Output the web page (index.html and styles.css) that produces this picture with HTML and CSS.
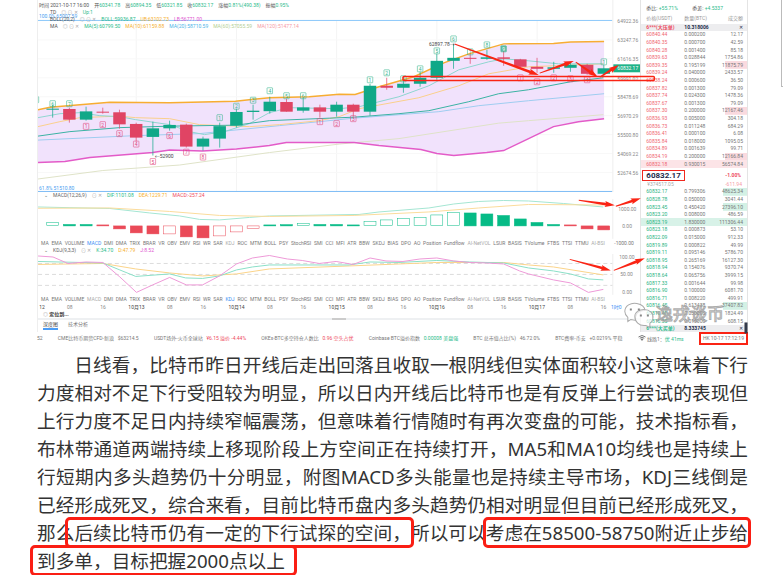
FILE: index.html
```
<!DOCTYPE html>
<html lang="zh-CN">
<head>
    <meta charset="UTF-8">
    <meta name="viewport" content="width=device-width, initial-scale=1.0">
    <title>比特币行情分析</title>
    <link rel="stylesheet" href="styles.css">
</head>
<body>
    <div class="page">
        <article class="article">
            <div class="terminal">
                <div class="main">
                    <div class="chart">
                        <section class="price-panel">
                            <svg id="priceChart" class="plot" viewBox="38 0 604 193"></svg>
                            <div class="legend">
                                <p><span>时间 2021-10-17 16:00</span> <span>开<b class="green">60341.78</b></span> <span>高<b class="green">60894.35</b></span> <span>低<b class="green">60321.85</b></span> <span>收<b class="green">60832.17</b></span> <span>涨幅<b class="green">0.81%(490.38)</b></span> <span>振幅<b class="green">0.95%</b></span></p>
                                <p class="indent"><span>TD</span> <span class="icons">◎ ⊙ ✕</span> <b class="green">Up:1</b></p>
                                <p class="indent"><span>BOLL(20,2)</span> <span class="icons">◎ ⊙ ✕</span> <b class="green">BOLL:59936.87</b> <b class="orange">UB:63102.73</b> <b class="magenta">LB:56771.00</b></p>
                                <p class="indent"><span>MA</span> <span class="icons">◎ ⊙ ✕</span> <b class="green">MA(5):60799.50</b> <b class="orange">MA(10):61159.88</b> <b class="blue">MA(20):58710.59</b> <b class="lime">MA(60):57055.59</b> <b class="pink">MA(120):51477.14</b></p>
                            </div>
                        </section>
                        <section class="sub-panel">
                            <p class="sub-title"><span>⌄</span> <span>MACD(12,26,9)</span> <span class="icons">⊙ ✕</span> <b class="green">DIF:1101.08</b> <b class="orange">DEA:1229.71</b> <b class="red">MACD:-257.24</b></p>
                            <svg id="macdChart" class="plot" viewBox="38 199 604 40"></svg>
                        </section>
                        <div class="tabs-row">
                            <nav class="tabs" data-active="MACD" data-muted="KDJ"></nav>
                            <span class="tick">-1000.00</span>
                        </div>
                        <section class="sub-panel">
                            <p class="sub-title"><span>⌄</span> <span>KDJ(9,3,3)</span> <span class="icons">⊙ ✕</span> <b class="green">K:34.70</b> <b class="orange">D:47.79</b> <b class="magenta">J:8.52</b></p>
                            <svg id="kdjChart" class="plot" viewBox="38 253 604 41"></svg>
                        </section>
                        <div class="tabs-row">
                            <nav class="tabs" data-active="KDJ" data-muted="MACD"></nav>
                            <span class="tick"></span>
                        </div>
                        <svg id="timeAxis" class="plot" viewBox="38 302 604 8"></svg>
                        <div class="locate"><span class="icons">◎</span> <b>定位到...</b></div>
                        <div class="scrollbar"><span class="thumb"></span></div>
                        <nav class="views">
                            <button class="view active">深度图</button>
                            <button class="view">技术分析</button>
                        </nav>
                    </div>
                    <aside class="book">
                        <div class="ratio"><span>委比: <b class="green">+55.71%</b></span><span>委差: <b class="green">+4.5337</b></span></div>
                        <div class="book-head"><span>价格(USDT)</span><span>数量(BTC)</span><span>成交额</span></div>
                        <div class="big-order"><b class="red">6***(大压单)</b><b>10.318006</b><span>✕</span></div>
                        <table class="orders asks"><tbody id="asks"></tbody></table>
                        <div class="last">
                            <strong>60832.17</strong><b class="red">-1.00%</b>
                            <span>¥374517.05</span><span class="pink">-611.94</span>
                        </div>
                        <table class="orders bids"><tbody id="bids"></tbody></table>
                        <div class="big-order"><b class="green">6***(大买单)</b><b>8.333745</b><span>✕</span></div>
                    </aside>
                </div>
                <footer class="ticker">
                    <span>52</span>
                    <span>CME比特币期货CFD-新浪 &nbsp; $63214.5</span>
                    <span>USDT场外-火币全球站 &nbsp; <b class="red">¥6.15 溢价 -4.44%</b></span>
                    <span>OKEx-BTC多空持仓人数比 &nbsp; <b class="red">0.96 空头占优</b></span>
                    <span>Coinbase BTC溢价指数 &nbsp; <b class="green">0.00008 美盘强</b></span>
                    <span>BTC 总市值占比(%) &nbsp; 46.72 0%</span>
                    <span>BTC费率-币安 &nbsp; +0.0219% 平稳</span>
                    <span><svg class="wifi" viewBox="0 0 16 12"><path d="M1 4Q8-2 15 4M3.500 6.500Q8 3 12.500 6.500" /><path class="dot" d="M5 8Q8 6 11 8L8 12Z" /></svg> 线路1：<b class="green">优 41ms</b></span>
                    <time>HK 10-17 17:12:19</time>
                </footer>
                <svg id="notes" class="notes" viewBox="38 0 710 345">
                    <g class="wechat">
                        <path d="M625 311c0-6 6-9 12-8c5 1 8 4 8 7c-8 0-10 5-9 10l-5-1l-3 2v-4q-3-3-3-6Z" />
                        <path d="M635 316c0-5 5-7 9-7c6 0 10 4 9 9c0 2-2 4-3 5v4l-4-2c-7 1-11-4-11-9Z" />
                        <path class="eye" d="M630 309h2M638 309h2M640 315h2M647 315h2" />
                    </g>
                    <text class="watermark" x="656" y="320">逸戎谈币</text>
                </svg>
            </div>
            <p class="text">日线看，比特币昨日开线后走出回落且收取一根阴线但实体面积较小这意味着下行力度相对不足下行受阻较为明显，所以日内开线后比特币也是有反弹上行尝试的表现但上行力度不足日内持续窄幅震荡，但意味着行情随时有再次变盘的可能，技术指标看，布林带通道两端持续上移现阶段上方空间正在持续打开，MA5和MA10均线也是持续上行短期内多头趋势仍十分明显，附图MACD多头能量也是持续主导市场，KDJ三线倒是已经形成死叉，综合来看，目前比特币盘内多头趋势仍相对明显但目前已经形成死叉，那么<mark class="early">后续比特币仍有一定的下行试探的空间，</mark>所以可以<mark>考虑在58500-58750附近止步给</mark><mark class="wide">到多单，目标把握2000点以上</mark></p>
        </article>
        <div class="edge"></div>
    </div>
    <script src="script.js"></script>
</body>
</html>
```
FILE: styles.css
```
body {
    margin: 0;
    background: #fff;
    color: #333;
    font-family: "Noto Sans", "Noto Sans CJK SC", sans-serif;
}
p {
    margin: 0;
}
b {
    font-weight: normal;
}
button {
    border: none;
    padding: 0;
    background: none;
    font: inherit;
    color: inherit;
    cursor: pointer;
}
.page {
    display: flex;
    justify-content: space-between;
}
.article {
    flex: 1;
    margin: 0 33px 0 37px;
}
.edge {
    height: 86px;
    border-left: 1px solid #bbb;
    border-bottom: 1px solid #bbb;
    width: 1px;
}

/* article text */
.text {
    margin-top: 6px;
    font-size: 14pt;
    line-height: 28px;
    text-indent: 2em;
    text-align: justify;
}
.text mark {
    background: none;
    color: inherit;
    outline: 3px solid #fa1e14;
    border-radius: 2px;
}
.text .early {
    padding-left: 6px;
    margin-left: -6px;
}
.text .wide {
    padding: 0 9px 0 4px;
    margin: 0 -9px 0 -4px;
}

/* trading terminal */
.terminal {
    position: relative;
    font-family: Roboto, "Noto Sans CJK SC", sans-serif;
    font-size: 5px;
    line-height: 7px;
    color: #777;
}
.main {
    display: flex;
}
.chart {
    flex: 604;
    min-width: 0;
    border-left: 1px solid #eee;
    box-sizing: border-box;
}
.plot {
    display: block;
    width: 100%;
}
.price-panel {
    position: relative;
}
.legend {
    position: absolute;
    top: 2px;
    left: 1px;
    color: #555;
}
.legend p,
.sub-title {
    display: flex;
    gap: 5px;
    white-space: nowrap;
}
.legend .indent {
    padding-left: 11px;
}
.icons {
    color: #aaa;
}
.green { color: #2abb8b; }
.red { color: #ee4a5e; }
.orange { color: #f5b02e; }
.blue { color: #4cb4e8; }
.magenta { color: #e055d0; }
.lime { color: #b4cf94; }
.pink { color: #f59aa4; }

.sub-title {
    padding-left: 6px;
    color: #666;
}
.tabs-row {
    display: flex;
    height: 8px;
    align-items: center;
}
.tabs {
    flex: 1;
    display: flex;
    justify-content: space-between;
    padding: 0 9px 0 3px;
}
.tabs .active {
    color: #3b8ff5;
}
.tabs .muted {
    color: #aaa;
}
.tick {
    width: 26px;
}
.locate {
    padding-left: 5px;
    color: #333;
}
.locate b {
    font-weight: bold;
}
.scrollbar {
    height: 2px;
    background: #eef0f2;
}
.thumb {
    display: block;
    width: 14px;
    height: 2px;
    margin: 0 auto;
    background: #ccc;
}
.views {
    display: flex;
    gap: 10px;
    padding: 1px 5px 0;
}
.view {
    border-bottom: 2px solid transparent;
}
.view.active {
    color: #444;
    border-color: #4b9cf5;
}

/* order book */
.book {
    flex: 106;
    border-right: 1px solid #e4e4e4;
    border-left: 1px solid #e4e4e4;
    box-sizing: border-box;
    font-variant-numeric: tabular-nums;
}
.ratio {
    display: grid;
    grid-template-columns: 46px 1fr;
    padding: 5px 5px 3px;
    color: #555;
}
.book-head,
.big-order {
    display: grid;
    grid-template-columns: 38px 1fr auto;
    padding: 0 4px 0 5px;
}
.book-head {
    padding-bottom: 2px;
    color: #999;
}
.big-order {
    background: #ededef;
    color: #222b4a;
}
.big-order b {
    font-weight: bold;
}
.orders {
    width: 100%;
    height: 137px;
    border-collapse: collapse;
    line-height: 7px;
}
.orders td {
    padding: 0;
}
.orders td:first-child {
    width: 38px;
    padding-left: 5px;
}
.orders td:last-child {
    padding-right: 4px;
    text-align: right;
}
.asks td:first-child { color: #ef6672; }
.bids td:first-child { color: #1fb37f; }
.asks .full { background: #fce4e7; }
.bids .full { background: #d8f2e8; }
.asks .bar {
    background: linear-gradient(#fadadf, #fadadf) right / 22px no-repeat;
}
.bids .bar {
    background: linear-gradient(#d3f1e5, #d3f1e5) right / 24px no-repeat;
}
.last {
    display: grid;
    grid-template-columns: 1fr auto;
    align-items: center;
    padding: 2px 5px 0 1px;
}
.last strong {
    justify-self: start;
    padding: 0 3px;
    border: 1px solid #f0281e;
    font-size: 8px;
    line-height: 9px;
    color: #222b4a;
}
.last .red {
    font-weight: bold;
}
.last span:nth-of-type(1) {
    padding-left: 5px;
    color: #aaa;
}

.ticker {
    display: flex;
    align-items: center;
    justify-content: space-between;
    height: 13px;
    white-space: nowrap;
}
.wifi {
    width: 8px;
    height: 6px;
    fill: none;
    stroke: #777;
    stroke-width: 2;
}
.wifi .dot {
    fill: #777;
    stroke: none;
}
.ticker time {
    padding: 1px 2px;
    border: 2px solid #fa2414;
}

/* svg drawing */
.notes {
    position: absolute;
    top: 0;
    left: 0;
    width: 100%;
    pointer-events: none;
}
.arrow {
    fill: #fa2414;
}
.box {
    fill: none;
    stroke: #fa2414;
    stroke-width: 1.5;
}
.wechat path {
    fill: #fff;
    fill-opacity: 0.7;
    stroke: #aaa;
}
.wechat .eye {
    stroke: #888;
    stroke-width: 2;
}
.watermark {
    font-size: 17px;
    fill: #fff;
    fill-opacity: 0.6;
    stroke: #888;
    stroke-width: 1;
    stroke-opacity: 0.7;
}
.line {
    fill: none;
}
```
FILE: script.js
```
const NS = "http://www.w3.org/2000/svg";
const GREEN = "#10a888";
const RED = "#e04464";

function add(parent, tag, attrs, text) {
    const el = document.createElementNS(NS, tag);
    for (const key in attrs) el.setAttribute(key, attrs[key]);
    if (text !== undefined) el.textContent = text;
    parent.appendChild(el);
    return el;
}

function line(parent, points, color, width, opacity) {
    add(parent, "polyline", { points, class: "line", stroke: color, "stroke-width": width || 1, opacity: opacity || 1 });
}

function label(parent, x, y, text, color, anchor) {
    add(parent, "text", { x, y: y + 2, fill: color || "#888", "text-anchor": anchor || "start" }, text);
}

function candleX(i) {
    return 52.7 + i * 16.75;
}

// price chart
const price = document.getElementById("priceChart");
const upper = "38,110 50,107.5 110,102.5 170,103 236,101.5 270,98 310,97 340,94.5 356,94.7 380,87 415,77 445,63 470,54 505,44 555,43.7 572,42 605.7,41.5";
const lower = "38,163 65,162 90,158 153,153 170,150.5 203,151.5 237,149.5 270,146 287,142.8 355,142.8 380,146 422,150 438,154 455,156 488,153 505,151 530,139 555,127 580,122 605.7,119";

[136.5, 237, 337.5, 438, 538.6].forEach(x => line(price, `${x},21 ${x},192`, "#f4f4f4"));
[40, 59, 78, 97, 116, 135, 154, 173].forEach(y => line(price, `38,${y} 614,${y}`, "#f8f8f8"));
add(price, "polygon", { points: upper + " " + lower.split(" ").reverse().join(" "), fill: "#f1e2fc" });
line(price, "38,20.500 614,20.500", "#8cc8fa");
line(price, "38,192 614,192", "#7cbcf5");
line(price, "614.500,0 614.500,193", "#eee");
line(price, "38,179.5 103,171 180,165.5 270,153 340,144.5 400,139 500,123.5 530,121 605,115", "#dfe3c8");
line(price, "38,140.5 136,136 200,134 280,126 355,118.5 440,112 480,106 530,101 605.7,94", "#9fcdf0");
line(price, "38,127 60,122 80,118 105,117 120,116.5 136,118 170,119 200,125 250,127 280,125 320,121 340,117 360,109 420,98 460,86 490,74 530,67 605,64", "#fad08c");
line(price, "38,118 60,114 80,113 100,116 120,117 136,120 170,125 190,132 205,135 225,132 250,124 270,113 290,108 340,109 360,107 400,97 430,86 460,70 490,62 505,59 530,61 560,64 605,64", "#8fd6d0");
line(price, "38,136.5 70,132 120,128 170,126.5 237,125.5 270,121 330,118.5 355,117.5 400,114 430,111 470,102 500,94 530,90 572,82 605,78", "#3bb3a4");
line(price, upper, "#f7ad32", 1.5);
line(price, lower, "#e35bc8", 1.5);

// [body top, body bottom, wick top, wick bottom, up]
const candles = [
    [109, 110, 105, 118, 1], [109.3, 120, 108, 123, 0], [111.7, 120, 107, 121, 1], [112, 113, 108, 114, 0],
    [112.6, 124.7, 110, 129, 0], [124.3, 138, 123, 142, 0], [128.7, 137.3, 122, 156, 1], [125.3, 128.7, 121, 131, 1],
    [125, 147, 124, 148, 0], [139, 147, 137, 151, 1], [126.5, 139, 123, 148, 1], [112.3, 126, 109, 128, 1],
    [111, 112.3, 105, 120, 1], [102, 111.5, 97, 114, 1], [102.3, 112, 99, 112, 0], [107.7, 111, 98, 113, 1],
    [107.7, 112, 105, 118, 0], [105, 112, 102, 117, 1], [105, 112, 104, 117, 0], [86, 112, 84, 116, 1],
    [86, 88, 78, 90, 0], [84, 88, 80, 93, 1], [78, 84, 72, 87, 1], [61, 78, 54, 80, 1],
    [58, 61, 44, 69, 1], [58, 59, 54, 64, 0], [57.5, 59, 50, 60, 1], [57.5, 59, 50, 66, 0],
    [59.5, 67, 59, 67, 0], [67, 69, 58, 73, 0], [67.5, 69, 62, 73, 1], [65, 68, 62, 72, 1],
    [65, 74, 64, 75, 0], [68.5, 74, 65, 77, 1]
];
candles.forEach(([top, bottom, high, low, up], i) => {
    const x = candleX(i);
    const color = up ? GREEN : RED;
    line(price, `${x},${high} ${x},${low}`, color, 1, 0.7);
    add(price, "rect", { x: x - 6.25, y: top, width: 12.5, height: bottom - top, fill: color });
});

// [candle index, y, number]
const ups = [[-1, 100, ""], [0, 104, 6], [1, 104, 7], [10, 118, 1], [11, 106.5, 2], [12, 100.5, 3], [13, 91, 4], [14, 96, 5], [15, 96, 6],
    [19, 80, 1], [20, 73, 2], [21, 79, 3], [22, 69, 4], [23, 51, 5], [24, 39, 6], [25, 52, 7], [26, 45, 8], [27, 49, 9], [33, 62, 1]];
const downs = [[2, 126.7, 1], [3, 125, 2], [4, 134, 3], [5, 144.5, 4], [6, 162, 5], [7, 136, 6], [8, 152.6, 7], [9, 157.5, 8],
    [16, 122, 1], [17, 124, 2], [18, 119, 3], [28, 78, 1], [29, 82, 2], [30, 78, 2], [31, 79, 3], [32, 80, 4]];
function badge([i, y, n], color) {
    const x = candleX(i);
    const solid = n === 9;
    add(price, "rect", { x: x - 2.75, y: y - 3, width: 5.5, height: 6, rx: 0.5, fill: solid ? color : "none", stroke: color, "stroke-width": 0.7, opacity: 0.8 });
    label(price, x, y, n, solid ? "#fff" : color, "middle");
}
ups.forEach(b => badge(b, "#35b38c"));
downs.forEach(b => badge(b, "#e0487c"));

label(price, 430, 44, "62897.78→", "#444");
label(price, 155, 156, "←52900", "#444");
label(price, 39, 16, "100.0% 65007.59", "#4ba0f0");
label(price, 39, 188.5, "61.8% 51510.80", "#4ba0f0");
[["64922.36", 21], ["63247.76", 40], ["61616.35", 59], ["59991.02", 79], ["58478.69", 97], ["56970.29", 116], ["55500.80", 135], ["54069.22", 154.5], ["52674.56", 173.5]]
    .forEach(([text, y]) => label(price, 619, y, text));
add(price, "rect", { x: 615, y: 64.5, width: 27, height: 8, fill: "#1fb389" });
label(price, 619, 68.5, "60832.17", "#fff");

// macd
const macd = document.getElementById("macdChart");
line(macd, "614.500,199 614.500,239", "#eee");
line(macd, "38,207 70,207.7 110,208.5 150,213 180,216 200,219.5 220,220 250,217.5 270,216 360,214.5 380,212 430,208 455,204 480,201.5 505,200.5 530,201 565,203.5 605,207", "#a5e6d3");
line(macd, "38,208.3 110,208 170,211.5 220,215.5 270,216.5 355,215.5 430,212 480,208 530,204.5 605,205", "#fbdc9c");
// [top, bottom, up, filled]
const bars = [
    [222.5, 225.5, 1, 0], [224.5, 226, 1, 1], [224.5, 226, 1, 1], [225, 226, 0, 1], [226, 229, 0, 1], [226, 233, 0, 1], [226, 234, 0, 1],
    [226, 234, 0, 0], [226, 237, 0, 1], [226, 238, 0, 1], [226, 236, 0, 0], [226, 232, 0, 0], [226, 228.5, 0, 0], [225, 226, 1, 1],
    [224.7, 226, 1, 1], [223.8, 225.5, 1, 0], [224.5, 226, 1, 1], [224.5, 226, 1, 1], [225, 226, 1, 1], [221.5, 225.5, 1, 0], [220, 225.5, 1, 0],
    [218.5, 225.5, 1, 0], [217.5, 225.5, 1, 0], [215, 225.5, 1, 0], [212.5, 225.5, 1, 0], [213, 226, 1, 1], [214, 226, 1, 1], [215.5, 226, 1, 1],
    [219, 226, 1, 1], [222.5, 226, 1, 1], [224.5, 226, 1, 1], [225, 226, 0, 1], [226, 229, 0, 1], [226, 230, 0, 1]
];
bars.forEach(([top, bottom, up, filled], i) => {
    const color = up ? "#06bb86" : "#ea4a58";
    add(macd, "rect", { x: candleX(i) - 6, y: top, width: 12, height: bottom - top, fill: filled ? color : "#fff", stroke: color, "stroke-width": 0.5 });
});
label(macd, 620, 209, "1000.00");
label(macd, 624, 226, "0.00");

// kdj
const kdj = document.getElementById("kdjChart");
line(kdj, "614.500,253 614.500,294", "#eee");
[262.5, 273.5, 284.5].forEach(y => add(kdj, "path", { d: `M38 ${y}H614`, stroke: "#ccc", "stroke-width": 0.7, "stroke-dasharray": "4 3" }));
line(kdj, "38,263.5 103,262.5 136,268 170,272 203,275 237,273 270,268 350,265 400,263 438,261.5 505,261.5 530,264 555,266 605,274", "#fbd48a");
line(kdj, "38,260.5 103,262 120,269 136,275.5 170,273 186,277 203,277.5 220,275 237,269 253,266 270,264 350,264 371,261 400,261.5 438,259.5 471,261 505,262 530,267 555,270 572,273 590,278 605,279", "#8be0c8");
line(kdj, "38,255 53,256 68,262.5 86,261 103,261.5 120,276 136.7,291.5 153,284 170,276.5 186.7,284 203,284 220,275 237,263 253,257 270,254.5 288,258 303,259.5 320,262.5 337,260.5 354,263.5 371,257 387,260 404,260.5 421,258 438,257 455,260 471,261.5 488,262 505,263 521,270 530,273 555,279 572,282 590,291.5 605,288.5", "#ee9ad8");
label(kdj, 621, 256, "100.00");
label(kdj, 622, 273.5, "50.00");
label(kdj, 624, 291.5, "0.00");

// time axis
const axis = document.getElementById("timeAxis");
["08", "16", "10月13", "08", "16", "10月14", "08", "16", "10月15", "08", "16", "10月16", "08", "16", "10月17", "08", "16"]
    .forEach((text, i) => label(axis, 69.5 + i * 33.5, 306, text, text.length > 2 ? "#444" : "#888", "middle"));
label(axis, 39, 306, "12", "#444");
label(axis, 613, 306, "1时0", "#3b8ff5");

// hand-drawn marks over the terminal
const notes = document.getElementById("notes");
function arrow(x1, y1, x2, y2, size) {
    const len = Math.hypot(x2 - x1, y2 - y1);
    const ux = (x2 - x1) / len, uy = (y2 - y1) / len;
    const at = (d, w) => `${x1 + ux * d - uy * w},${y1 + uy * d + ux * w}`;
    const neck = len - size * 3;
    add(notes, "polygon", {
        class: "arrow",
        points: [at(0, 0.5), at(neck, size * 0.45), at(neck - 1, size), at(len, 0), at(neck - 1, -size), at(neck, -size * 0.45), at(0, -0.5)].join(" ")
    });
}
add(notes, "rect", { class: "box", x: 403.5, y: 76.5, width: 251, height: 4, rx: 1 });
arrow(455, 44, 539, 75, 3);
arrow(540, 73, 574, 61, 3);
arrow(576, 62, 598, 77, 3);
arrow(600, 77, 619, 65, 3);
arrow(579, 200, 615, 205, 3);
arrow(616, 206, 641, 198, 3);
arrow(570, 259, 611, 270, 3);
arrow(614, 270, 645, 258, 3);
add(notes, "rect", { x: 744.5, y: 322, width: 3, height: 11, fill: "#333a4a" });

// indicator tabs
const indicators = "MA EMA VOLUME MACD DMI DMA TRIX BRAR VR OBV EMV RSI WR SAR KDJ ROC MTM BOLL PSY StochRSI SMI CCI MFI ATR BBW SKDJ BIAS DPO AO Position Fundflow AI-NetVOL LSUR BASIS TVolume FTBS TTSI TTMU AI-BSI".split(" ");
document.querySelectorAll(".tabs").forEach(nav => {
    indicators.forEach(name => {
        const button = document.createElement("button");
        button.textContent = name;
        if (name === nav.dataset.active) button.className = "active";
        if (name === nav.dataset.muted || name.startsWith("AI-")) button.className = "muted";
        nav.appendChild(button);
    });
});

// order book
const asks = [
    ["60840.44", "0.000200", "12.17"], ["60840.35", "0.000700", "42.59"], ["60840.28", "0.001400", "85.18"],
    ["60839.63", "0.028844", "1754.86"], ["60839.35", "0.195199", "11875.79", "bar"], ["60839.24", "0.040000", "2433.57"],
    ["60838.24", "0.000600", "36.50"], ["60837.82", "0.001300", "79.09"], ["60837.74", "0.024300", "1478.36"],
    ["60837.67", "0.001300", "79.09"], ["60837.30", "0.200000", "12167.46", "bar"], ["60836.93", "0.005000", "304.18"],
    ["60836.73", "0.011248", "684.29"], ["60836.41", "0.000100", "6.08"], ["60835.84", "0.018000", "1095.05"],
    ["60834.89", "0.001639", "99.71"], ["60834.19", "0.200000", "12166.84", "bar"], ["60832.18", "0.930015", "56574.84", "full"]
];
const bids = [
    ["60832.17", "0.799306", "48625.34", "bar"], ["60828.78", "0.050000", "3041.44"], ["60823.45", "0.450420", "27396.10", "bar"],
    ["60823.20", "0.008000", "486.59"], ["60823.19", "1.830000", "111306.44", "full"], ["60823.18", "0.000873", "53.10"],
    ["60822.09", "0.015000", "912.33"], ["60819.89", "0.000822", "49.99"], ["60819.11", "0.095146", "5786.70"],
    ["60818.95", "0.265169", "16127.30"], ["60818.94", "0.154076", "9370.74"], ["60818.64", "0.065756", "3999.15"],
    ["60817.33", "0.001644", "99.98"], ["60816.90", "0.100000", "6081.70"], ["60816.71", "0.008220", "499.91"],
    ["60816.45", "0.613438", "37407.82", "bar"], ["60816.40", "0.030000", "1824.49"], ["60816.35", "0.010000", "608.15"]
];
function fillOrders(id, rows) {
    const body = document.getElementById(id);
    rows.forEach(([cost, amount, total, mark]) => {
        const row = body.insertRow();
        [cost, amount, total].forEach(value => row.insertCell().textContent = value);
        if (mark === "full") row.className = "full";
        if (mark === "bar") row.lastChild.className = "bar";
    });
}
fillOrders("asks", asks);
fillOrders("bids", bids);
```
